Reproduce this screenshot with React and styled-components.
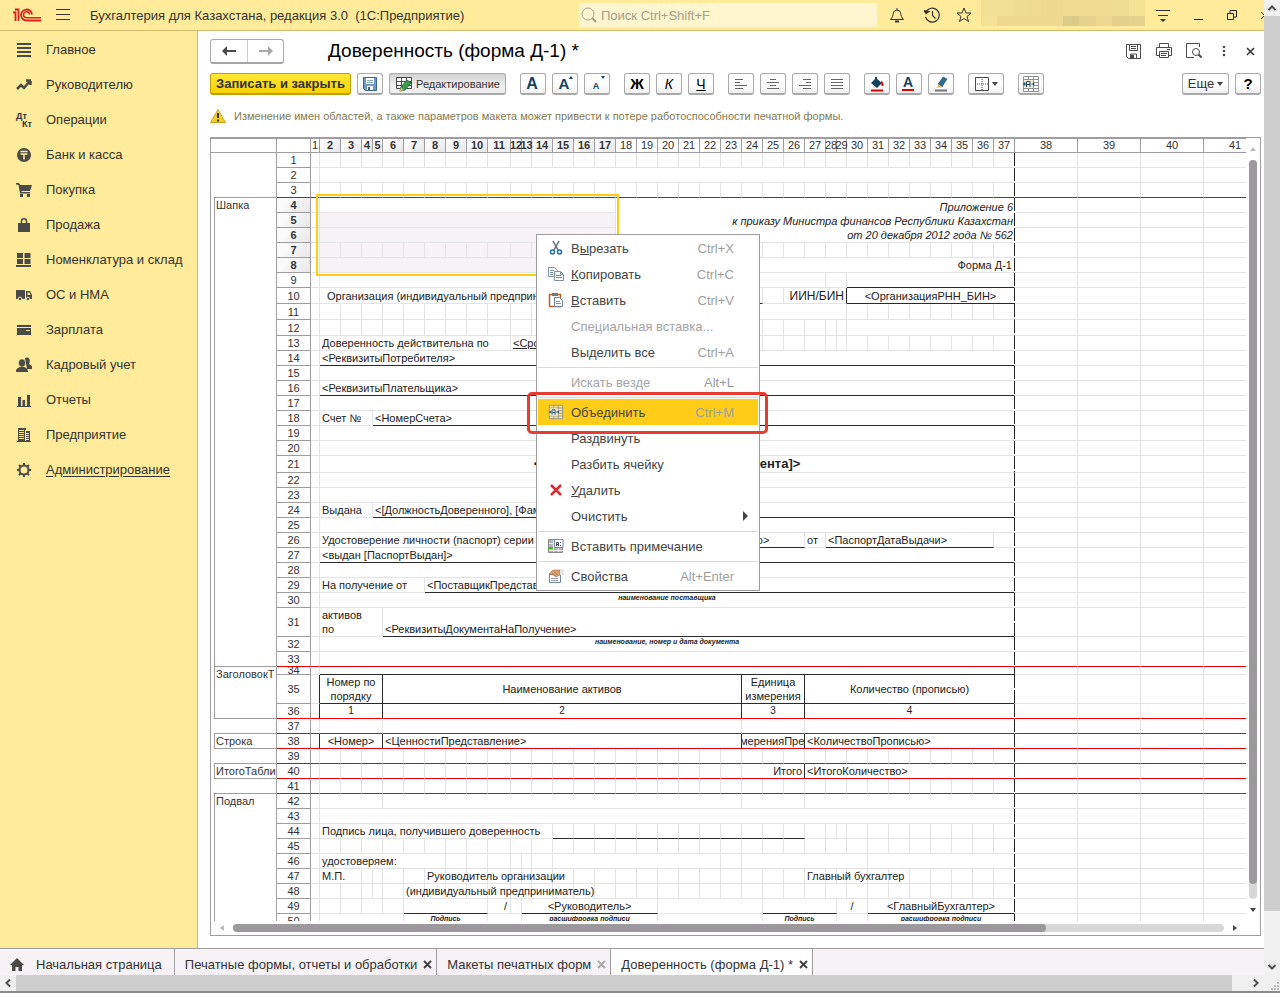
import styled, { createGlobalStyle, css } from "styled-components";

const GlobalStyle = createGlobalStyle`
    * {
        box-sizing: border-box;
    }

    body {
        margin: 0;
        font-family: "Liberation Sans", Arial, sans-serif;
        font-size: 13px;
        color: #333;
        background-color: white;
    }

    button, input {
        font-family: inherit;
        font-size: inherit;
        color: inherit;
    }
`

/* ---------- window ---------- */

const Window = styled.div`
    height: 100vh;
    display: grid;
    grid-template-columns: minmax(0, 1fr) 16px;
    grid-template-rows: minmax(0, 1fr) 18px;
    overflow: hidden;
`

const Program = styled.div`
    display: flex;
    flex-direction: column;
    min-width: 0;
    min-height: 0;
`

const OuterTrack = styled.div`
    display: flex;
    flex-direction: ${({ $row }) => ($row ? "row" : "column")};
    align-items: center;
    background-color: #f0f0f0;
    border-bottom: ${({ $row }) => ($row ? "2px solid #8a8a8a" : "0")};

    svg {
        flex: none;
    }
`

const OuterThumb = styled.div`
    flex: 1;
    align-self: stretch;
    background-color: #cdcdcd;
    margin: ${({ $row }) => ($row ? "0 16px 0 0" : "0 0 48px")};
`

const Grip = styled.div`
    background-color: #f0f0f0;
    border-bottom: 2px solid #8a8a8a;
    display: flex;
    align-items: flex-end;
    justify-content: flex-end;
`

/* ---------- top bar ---------- */

const TopBar = styled.header`
    height: 31px;
    flex: none;
    display: flex;
    align-items: center;
    background-color: #ffeb99;
    border-bottom: 1px solid #cdbb6a;
    padding-left: 12px;
    overflow: hidden;
`

const BarButton = styled.button`
    border: 0;
    padding: 0;
    background: none;
    width: ${({ $w }) => $w || 34}px;
    height: ${({ $h }) => $h || 30}px;
    flex: none;
    display: flex;
    align-items: center;
    justify-content: center;
`

// the last button of the bar runs out of the window
const CloseProgram = styled(BarButton)`
    margin-right: -16px;
`

const ProgramName = styled.div`
    margin-left: 6px;
    flex: 1;
    min-width: 0;
    white-space: pre;
    overflow: hidden;
`

const Search = styled.label`
    width: 298px;
    height: 24px;
    display: flex;
    align-items: center;
    gap: 4px;
    padding-left: 2px;
    border-radius: 2px;
    background-color: #fff5cf;
`

const SearchInput = styled.input`
    flex: 1;
    border: 0;
    padding: 0;
    outline: none;
    background: none;

    &::placeholder {
        color: #a5a08c;
        opacity: 1;
    }
`

const UserName = styled.div`
    width: 164px;
    height: 26px;
    flex: none;
    align-self: flex-start;
    display: grid;
    grid-template-columns: repeat(10, 1fr);
    grid-template-rows: 16px 10px;
`

const Blot = styled.span`
    background-color: ${({ $c }) => $c};
`

/* ---------- body ---------- */

const Body = styled.div`
    flex: 1;
    min-height: 0;
    display: flex;
`

const Sidebar = styled.nav`
    width: 198px;
    flex: none;
    background-color: #ffeb99;
    border-right: 1px solid #cdbb6a;
    padding-top: 1px;
`

const SideLink = styled.a`
    height: 35px;
    display: flex;
    align-items: center;
    gap: 14px;
    padding-left: 16px;
    color: #333;
    text-decoration: ${({ $active }) => ($active ? "underline" : "none")};
    text-underline-offset: 2px;
    white-space: nowrap;
`

const Main = styled.main`
    flex: 1;
    min-width: 0;
    display: flex;
    flex-direction: column;
    padding: 8px 3px 12px 12px;
`

const TitleRow = styled.div`
    height: 24px;
    display: flex;
    align-items: center;
`

const History = styled.div`
    width: 74px;
    height: 25px;
    display: flex;
    border: 1px solid #aaa;
    border-bottom: 2px solid #a5a5a5;
    border-radius: 3px;

    button + button {
        border-left: 1px solid #ccc;
    }
`

const Title = styled.h1`
    margin: 0 0 0 44px;
    flex: 1;
    font-size: 19px;
    font-weight: 400;
    color: black;
    white-space: nowrap;
`

const ToolRow = styled.div`
    height: 22px;
    margin-top: 10px;
    display: flex;
    gap: 14px;
`

const ToolGroup = styled.div`
    display: flex;
    gap: 6px;
    margin-left: ${({ $end }) => ($end ? "auto" : "0")};
`

const Tool = styled.button`
    height: 22px;
    width: ${({ $w }) => $w || 26}px;
    padding: 0;
    display: flex;
    align-items: center;
    justify-content: center;
    gap: 3px;
    white-space: nowrap;
    border: 1px solid #aaa;
    border-bottom: 2px solid #a9a9a9;
    border-radius: 3px;
    background: linear-gradient(#fff 50%, #f2f0f2);

    ${({ $main }) => $main && css`
        font-weight: 700;
        border-color: #c0a000;
        background: linear-gradient(#ffe838, #f7d200);
    `}

    ${({ $pressed }) => $pressed && css`
        font-size: 11px;
        background: linear-gradient(#d2d2d2, #eee 60%);
    `}
`

const Letter = styled.span`
    font-size: ${({ $s }) => $s || 15}px;
    font-weight: ${({ $thin }) => ($thin ? 400 : 700)};
    font-style: ${({ $italic }) => ($italic ? "italic" : "normal")};
    text-decoration: ${({ $under }) => ($under ? "underline" : "none")};
    color: black;
`

const Warning = styled.div`
    height: 24px;
    margin: 9px 0;
    display: flex;
    align-items: center;
    gap: 8px;
    font-size: 11px;
    color: #857b54;
    white-space: nowrap;
`

/* ---------- spreadsheet ---------- */

const Frame = styled.div`
    flex: 1;
    min-height: 0;
    border: 1px solid #a09da0;
    display: grid;
    grid-template-columns: minmax(0, 1fr) 14px;
    grid-template-rows: minmax(0, 1fr) 14px;
`

const Viewport = styled.div`
    position: relative;
    overflow: hidden;
`

const Sheet = styled.table`
    table-layout: fixed;
    width: 1056px;
    border-collapse: separate;
    border-spacing: 0;
    font-size: 11px;
    line-height: 14px;
`

const headCell = css`
    padding: 0;
    text-align: center;
    white-space: nowrap;
    font-weight: ${({ $on }) => ($on ? 700 : 400)};
    background: ${({ $on }) => ($on ? "linear-gradient(135deg, #fafafa 30%, #e9e7e9)" : "white")};
`

const ColHead = styled.th`
    ${headCell}
    height: 15px;
    border-top: 1px solid #a09da0;
    border-right: 1px solid #a09da0;
    border-bottom: 1px solid #a09da0;
    line-height: 13px;
`

const RowHead = styled.th`
    ${headCell}
    overflow: hidden;
    border-right: 1px solid #a09da0;
    border-bottom: 1px solid ${({ $red }) => ($red ? "#f00000" : "#a09da0")};
    line-height: ${({ $h }) => Math.min($h - 1, 14)}px;
`

const Gutter = styled.td`
    padding: 0;
`

const Group = styled.td`
    padding: 1px 0 0 1px;
    vertical-align: top;
    overflow: hidden;
    white-space: nowrap;
    border-left: ${({ $named }) => ($named ? "1px solid #a09da0" : "0")};
    border-right: 1px solid #a09da0;
    border-bottom: 1px solid #a09da0;
    line-height: 13px;
`

const lineColor = { light: "#e4e4e4", black: "#2a2a2a", red: "#f00000", none: "transparent" }

const Cell = styled.td`
    padding: 0 ${({ $pad }) => $pad ?? 2}px;
    overflow: ${({ $spill }) => ($spill ? "visible" : "hidden")};
    white-space: pre;
    text-align: ${({ $align }) => $align || "left"};
    vertical-align: ${({ $v }) => $v || "middle"};
    font-size: ${({ $size }) => $size || 11}px;
    font-weight: ${({ $bold }) => ($bold ? 700 : 400)};
    font-style: ${({ $italic }) => ($italic ? "italic" : "normal")};
    text-decoration: ${({ $under }) => ($under ? "underline" : "none")};
    line-height: ${({ $lh }) => $lh || 14}px;
    background-color: ${({ $sel }) => ($sel ? "#f6f2f6" : "transparent")};
    border-right: 1px solid ${({ $right }) => lineColor[$right || "light"]};
    border-bottom: 1px solid ${({ $bottom }) => lineColor[$bottom || "light"]};
    color: #222;

    /* dashed edge of the printed page */
    ${({ $page }) => $page && css`
        background-image: repeating-linear-gradient(#222 0 13px, transparent 13px 15px);
        background-position: right top;
        background-size: 1px 100%;
        background-repeat: no-repeat;
        background-origin: border-box;
    `}
`

const Clip = styled.div`
    display: flex;
    justify-content: center;
`

const Selection = styled.div`
    position: absolute;
    left: 105px;
    top: 56px;
    width: 303px;
    height: 82px;
    border: 2px solid #fc1;
`

const Track = styled.div`
    display: flex;
    flex-direction: ${({ $row }) => ($row ? "row" : "column")};
    align-items: center;
    justify-content: space-between;
    padding: ${({ $row }) => ($row ? "0 8px" : "8px 0")};
`

const Groove = styled.div`
    flex: 1;
    display: flex;
    flex-direction: ${({ $row }) => ($row ? "row" : "column")};
    ${({ $row }) => ($row ? "height: 8px; margin: 0 8px;" : "width: 8px; margin: 8px 0;")}
    border-radius: 4px;
    background-color: #d8d8d8;
`

const Thumb = styled.div`
    flex: 0 0 ${({ $part }) => $part};
    border-radius: 4px;
    background-color: #9c999c;
`

/* ---------- context menu ---------- */

const Menu = styled.div`
    position: absolute;
    left: 325px;
    top: 96px;
    width: 224px;
    border: 1px solid #a09da0;
    background-color: white;
    padding: 0 1px 1px;
`

const MenuItem = styled.button`
    width: 100%;
    height: 26px;
    border: 0;
    padding: 0 24px 0 10px;
    display: grid;
    grid-template-columns: 16px 1fr auto;
    column-gap: 7px;
    align-items: center;
    text-align: left;
    background-color: ${({ $on }) => ($on ? "#ffcc17" : "transparent")};
    color: ${({ $off }) => ($off ? "#a5a5a5" : "#444")};
`

const Keys = styled.span`
    color: ${({ $off }) => ($off ? "#999" : "#a0a0a0")};
`

const Divider = styled.hr`
    margin: 2px 0 1px;
    border: 0;
    height: 1px;
    background-color: #ddd9cf;
`

const Arrow = styled.span`
    width: 5px;
    height: 10px;
    justify-self: end;
    margin-right: -14px;
    background-color: #444;
    clip-path: polygon(0 0, 100% 50%, 0 100%);
`

const RedFrame = styled.div`
    position: absolute;
    left: 316px;
    top: 254px;
    width: 241px;
    height: 42px;
    border: 3px solid #e63c32;
    border-radius: 5px;
`

/* ---------- tabs ---------- */

const Tabs = styled.nav`
    height: 27px;
    flex: none;
    display: flex;
    background-color: #f6f2f6;
    border-top: 1px solid #a09da0;
`

const Tab = styled.div`
    display: flex;
    align-items: center;
    gap: 6px;
    padding: 5px 4px 0 10px;
    white-space: nowrap;
    border-right: 1px solid #a09da0;
    background-color: ${({ $active }) => ($active ? "white" : "transparent")};

    a {
        color: #333;
        text-decoration: none;
    }

    &:first-child {
        gap: 12px;
        padding-right: 12px;
    }
`

const TabClose = styled.button`
    border: 0;
    padding: 0;
    background: none;
    display: flex;
    color: ${({ $dim }) => ($dim ? "#aaa" : "#444")};
`

/* ---------- icons ---------- */

function Icon({ s = 16, h, box, children, ...rest }) {
    return (
        <svg width={s} height={h || s} viewBox={box || `0 0 ${s} ${h || s}`} fill="none" stroke="#4a4a4a" strokeWidth="1" aria-hidden="true" {...rest}>
            {children}
        </svg>
    )
}

const solid = { fill: "#4a4a46", stroke: "none" }

const sideIcons = {
    list: <path {...solid} d="M1 1h14v2H1zM1 5h14v2H1zM1 9h14v2H1zM1 13h14v2H1z" />,
    trend: <path d="M1 12l4-4 3 3 5-6M10 3.500h5M14.500 4v4" strokeWidth="2.500" stroke="#4a4a46" />,
    coin: <>
        <circle {...solid} cx="8" cy="8" r="7" />
        <path d="M4.500 4.500h7M4.500 7h7M8 7v5.500" stroke="#ffeb99" strokeWidth="1.500" />
    </>,
    cart: <path {...solid} d="M0 1h3l1 2h12l-2 6H5.500v1H14v1.500H4L2.500 3 0 2.500zM4 12h3v3H4zM11 12h3v3h-3z" />,
    bag: <>
        <path {...solid} d="M2 6h12v9H2z" />
        <path d="M5.500 8V4c0-3 5-3 5 0v4" stroke="#4a4a46" strokeWidth="1.500" />
    </>,
    boxes: <path {...solid} d="M1 1h6v5H1zM8.500 1h6v5h-6zM1 7h6v5H1zM8.500 7h6v5h-6zM0 13h15v2H0z" />,
    truck: <>
        <path {...solid} d="M0 3h9v9H0zM10 4h4l2 4v4h-6z" />
        <path fill="#ffeb99" stroke="none" d="M11.500 5.500h2l1 2.500h-3z" />
        <circle cx="4" cy="12" r="1.800" fill="#4a4a46" stroke="#ffeb99" />
        <circle cx="12" cy="12" r="1.800" fill="#4a4a46" stroke="#ffeb99" />
    </>,
    card: <>
        <path {...solid} d="M1 3h14v2H1zM1 6h14v7H1z" />
        <path stroke="#ffeb99" d="M10 8.500h4" />
    </>,
    people: <>
        <path {...solid} d="M9 1c4-2 6 2 4 6l3 2v3h-5z" />
        <ellipse cx="6" cy="6" rx="3.500" ry="4" fill="#4a4a46" stroke="#ffeb99" strokeWidth="0.500" />
        <path {...solid} d="M0 15c0-4 2-4 4-5h4c2 1 4 1 4 5z" />
    </>,
    chart: <path {...solid} d="M2 5h3v9H2zM6.500 8h2.500v6H6.500zM11 3h3v11h-3zM1 14h14v1H1z" />,
    building: <>
        <path {...solid} d="M2 1h8v14H2zM10 4h4v11h-4zM1 14h14v1H1z" />
        <path stroke="#ffeb99" d="M3 3.500h5M3 5.500h5M3 7.500h5M3 9.500h5M3 11.500h5M10 6.500h3M10 8.500h3M10 10.500h3M10 12.500h3M9.500 3v11" />
    </>,
    gear: <>
        <circle cx="8" cy="8" r="4.500" stroke="#4a4a46" strokeWidth="2" />
        <path d="M8 1v2M8 13v2M1 8h2M13 8h2M3 3l1.500 1.500M11.500 11.500L13 13M3 13l1.500-1.500M11.500 4.500L13 3" stroke="#4a4a46" strokeWidth="2" />
    </>,
}

const Entry = styled.span`
    width: 16px;
    display: grid;
    font: 700 9px/8px "Liberation Sans", sans-serif;

    span:last-child {
        text-align: right;
    }
`

function Logo() {
    return (
        <Icon s={30} h={16} stroke="#d9231c" strokeWidth="1.800">
            <path d="M1 5.500h2.500V14M3 2.500h3.500V14" />
            <path d="M20 7.500A5.500 5.500 0 1 0 15 13.500h14" />
            <path d="M17.500 7.500A3 3 0 1 0 15 10.700h14" strokeWidth="1.500" />
        </Icon>
    )
}

function MergeIcon({ s = 18 }) {
    return (
        <Icon s={s} box="0 0 18 18" stroke="#8f9396">
            <path fill="#fff" fillOpacity="0.500" d="M1.500 1.500h15v15h-15z" />
            <path d="M1 4.500h16M1 13.500h16M6.500 1v3M11.500 1v16M6.500 14v3M12 7.500h5M12 10.500h5" />
            <path stroke="none" fill="#f4efdd" d="M2 5h9v8H2z" />
            <path stroke="#1b4762" d="M1 9h3M9.500 9h3M2.500 7.500v3M11.500 7.500v3M4.500 12V6.500h3.500V12M5 9.500h3" />
        </Icon>
    )
}

function Disk() {
    return (
        <Icon s={16}>
            <path d="M1.500 1.500h13v13h-11l-2-2z" fill="#6d9cc9" stroke="#3d668e" />
            <path fill="#fff" stroke="none" d="M4 2h8v6H4zM5 10h6v4H5z" />
            <path stroke="#8aa" d="M5 4.500h6M5 6.500h6" />
            <path fill="#3d668e" stroke="none" d="M6 11h2v3H6z" />
        </Icon>
    )
}

function EditIcon() {
    return (
        <Icon s={18} h={16}>
            <path fill="#fff" d="M1.500 1.500h15v11h-15z" />
            <path d="M1 5.500h15M1 9.500h15M6.500 1v12M11.500 1v12" />
            <path d="M5 15l1-4 6-7 4 3-6 7z" fill="#3a9a4c" stroke="#24713a" />
            <path d="M4.500 15.500l1.500-4 3 2.500z" fill="#e0b070" stroke="none" />
        </Icon>
    )
}

function Lines({ rows }) {
    return (
        <Icon s={14} stroke="#666">
            {rows.map(([x1, x2], i) => <path key={i} d={`M${x1} ${i * 3 + 2}.5H${x2}`} />)}
        </Icon>
    )
}

function BigA({ s = 16, mark, line }) {
    return (
        <Icon s={18}>
            <text x="8" y={line ? 12 : 14} fontSize={s} fontWeight="700" textAnchor="middle" fill="#12425f" stroke="none">А</text>
            {mark && <path fill="#12425f" stroke="none" d={mark === "up" ? "M13 4l2-3 2 3z" : "M13 1h4l-2 3z"} />}
            {line && <path stroke="#e00000" strokeWidth="2" d="M2 15h12" />}
        </Icon>
    )
}

const Caret = () => <Icon s={6} h={4}><path fill="#444" stroke="none" d="M0 0h6L3 4z" /></Icon>

const Cross = ({ w = 1.5 }) => <Icon s={9} stroke="currentColor" strokeWidth={w}><path d="M1 1l7 7M8 1L1 8" /></Icon>

const Chevron = ({ d }) => <Icon s={16} stroke="#505050" strokeWidth="2"><path d={d} /></Icon>

const Tri = ({ d, c = "#444" }) => <Icon s={6} stroke="none" fill={c}><path d={d} /></Icon>

const menuIcons = {
    cut: <>
        <path d="M5 1l5 9M11 1L6 10" stroke="#5c6a75" strokeWidth="1.500" />
        <circle cx="4.500" cy="12" r="2" stroke="#1d6ca8" strokeWidth="1.500" />
        <circle cx="11.500" cy="12" r="2" stroke="#1d6ca8" strokeWidth="1.500" />
    </>,
    copy: <>
        <path d="M.5 1.500h6l3 3v6h-9z" fill="#fff" stroke="#7d8ea0" />
        <path d="M2 4.500h4M2 6.500h3M2 8.500h3" stroke="#7d8ea0" />
        <path d="M6.500 5.500h6l3 3v6h-9z" fill="#fff" stroke="#7d8ea0" />
        <path d="M8 9.500h5M8 11.500h6M12.500 6v2.500H15" stroke="#7d8ea0" />
    </>,
    paste: <>
        <path d="M1.500 2.500h11v12h-11z" fill="#fff" stroke="#b5652a" strokeWidth="1.500" />
        <path d="M4 1h6v3H4z" fill="#777" stroke="none" />
        <path d="M6.500 5.500h5l3 3v6h-8z" fill="#fff" stroke="#6d83a0" />
        <path d="M8 9.500h4M8 11.500h5" stroke="#7d8ea0" />
    </>,
    remove: <path d="M3 3l10 10M13 3L3 13" stroke="#dc2a30" strokeWidth="2.500" />,
    note: <>
        <path fill="#b5b5b5" stroke="#888" d="M.5 1.500h14v13H.500z" />
        <path stroke="#eee" d="M1 5.500h5M1 9.500h14M1 12.500h14M5.500 2v12M10.500 10v4" />
        <path fill="#fff" stroke="#6b8ba8" d="M6.500 1.500h8.500v8H6.500z" />
        <path stroke="#446" d="M8.500 8V4.500h2V8M9 6.500h1M12.500 4v1M12.500 7v1" />
        <path stroke="#4fb020" strokeWidth="2" d="M0 10h5" />
    </>,
    props: <>
        <path fill="#fff" stroke="#6b8ba8" d="M1.500 6.500h11v8h-11z" />
        <path stroke="#99a" d="M3 10.500h7M3 12.500h7" />
        <path fill="#d9a273" stroke="#9a6238" strokeWidth="0.500" d="M1 6l4-4h7v5l-4 2-3-2z" />
        <path stroke="#9a6238" strokeWidth="0.500" d="M4 5l4 3M6 4l4 3" />
        <path fill="#dfe6ee" stroke="none" d="M12 1h4v6h-4z" />
    </>,
}

/* ---------- data ---------- */

const sections = [
    ["Главное", "list"],
    ["Руководителю", "trend"],
    ["Операции", "entry"],
    ["Банк и касса", "coin"],
    ["Покупка", "cart"],
    ["Продажа", "bag"],
    ["Номенклатура и склад", "boxes"],
    ["ОС и НМА", "truck"],
    ["Зарплата", "card"],
    ["Кадровый учет", "people"],
    ["Отчеты", "chart"],
    ["Предприятие", "building"],
    ["Администрирование", "gear"],
]

const menu = [
    { text: ["В", "ы", "резать"], keys: "Ctrl+X", icon: "cut" },
    { text: ["", "К", "опировать"], keys: "Ctrl+C", icon: "copy" },
    { text: ["", "В", "ставить"], keys: "Ctrl+V", icon: "paste" },
    { text: ["Спе", "ц", "иальная вставка..."], off: true },
    { text: ["Вы", "д", "елить все"], keys: "Ctrl+A" },
    null,
    { text: ["Искать везде"], keys: "Alt+L", off: true },
    null,
    { text: ["Объединить"], keys: "Ctrl+M", icon: "merge", on: true },
    { text: ["Раздвинуть"] },
    { text: ["Разбить ячейку"] },
    { text: ["", "У", "далить"], icon: "remove" },
    { text: ["Очистить"], sub: true },
    null,
    { text: ["Вставить примечание"], icon: "note" },
    null,
    { text: ["Свойства"], keys: "Alt+Enter", icon: "props" },
]

// column widths that differ from the usual 21px
const special = { 1: 9, 4: 11, 5: 10, 11: 23, 12: 11, 13: 10, 28: 11, 29: 10, 38: 63, 39: 63, 40: 63, 41: 63 }
const columns = Array.from({ length: 41 }, (_, i) => special[i + 1] || 21)

const heights = { 10: 16, 11: 16, 12: 16, 21: 17, 31: 29, 34: 8, 35: 29 }

const groups = {
    1: ["", 3],
    4: ["Шапка", 30],
    34: ["ЗаголовокТ", 3],
    37: ["", 1],
    38: ["Строка", 1],
    39: ["", 1],
    40: ["ИтогоТабли", 1],
    41: ["", 1],
    42: ["Подвал", 9],
}

const redAfter = [3, 33, 36, 37, 38, 39, 40, 41]

const joined = [[4, 5], [12, 13], [28, 29]]
const box = { right: "black", bottom: "black" }
const small = { size: 7, bold: true, italic: true, align: "center", lh: 10, v: "top" }

// each cell: [first column, last column, text, look]
const cells = {
    1: joined,
    2: [[2, 37]],
    3: joined,
    4: [[2, 17], [18, 37, "Приложение 6\nк приказу Министра финансов Республики Казахстан\nот 20 декабря 2012 года № 562", { align: "right", italic: true, rows: 3, v: "bottom", pad: 1 }]],
    5: [[2, 17, "", { sel: true }]],
    6: [[2, 17, "", { sel: true }]],
    7: joined,
    8: [[2, 17, "", { sel: true }], [18, 37, "Форма Д-1", { align: "right" }]],
    9: [[2, 27], [28, 29], [30, 37, "", { bottom: "black" }]],
    10: [
        [2, 17, "Организация (индивидуальный предприниматель)", { pad: 7 }],
        [18, 24, "", { bottom: "black" }],
        [26, 29, "ИИН/БИН", { right: "black", size: 12, align: "right" }],
        [30, 37, "<ОрганизацияРНН_БИН>", { bottom: "black", align: "center" }],
    ],
    11: [[4, 5], [12, 13], [14, 29]],
    12: [[4, 5], [12, 13], [30, 37]],
    13: [[2, 11, "Доверенность действительна по"], [12, 24, "<СрокДействия>", { under: true }]],
    14: [[2, 37, "<РеквизитыПотребителя>", { bottom: "black" }]],
    15: [[2, 37]],
    16: [[2, 37, "<РеквизитыПлательщика>", { bottom: "black" }]],
    17: [[2, 37]],
    18: [[2, 4, "Счет №"], [5, 37, "<НомерСчета>", { bottom: "black" }]],
    19: [[2, 37]],
    20: [[2, 37]],
    21: [[2, 37, "<ДОВЕРЕННОСТЬ № [НомерДокумента]>", { align: "center", bold: true, size: 13 }]],
    22: [[2, 37]],
    23: [[2, 37]],
    24: [[2, 4, "Выдана"], [5, 37, "<[ДолжностьДоверенного], [Фамилия]>", { bottom: "black" }]],
    25: [[2, 37]],
    26: [
        [2, 15, "Удостоверение личности (паспорт) серии"],
        [16, 26, "<ПаспортНомерУдостоверено>", { bottom: "black", align: "center" }],
        [27, 27, "от"],
        [28, 36, "<ПаспортДатаВыдачи>", { bottom: "black" }],
    ],
    27: [[2, 37, "<выдан [ПаспортВыдан]>", { bottom: "black" }]],
    28: [[2, 37]],
    29: [[2, 7, "На получение от"], [8, 37, "<ПоставщикПредставление>", { bottom: "black" }]],
    30: [[2, 37, "наименование поставщика", small]],
    31: [[2, 5, "активов\nпо"], [6, 37, "<РеквизитыДокументаНаПолучение>", { bottom: "black", v: "bottom" }]],
    32: [[2, 37, "наименование, номер и дата документа", small]],
    33: [[2, 37]],
    34: [[2, 37, "", { bottom: "black" }]],
    35: [
        [1, 1, "", { right: "black" }],
        [2, 5, "Номер по\nпорядку", { ...box, align: "center" }],
        [6, 23, "Наименование активов", { ...box, align: "center" }],
        [24, 26, "Единица\nизмерения", { ...box, align: "center" }],
        [27, 37, "Количество (прописью)", { ...box, align: "center" }],
    ],
    36: [
        [1, 1, "", { right: "black" }],
        [2, 5, "1", { right: "black", align: "center", size: 10 }],
        [6, 23, "2", { right: "black", align: "center", size: 10 }],
        [24, 26, "3", { right: "black", align: "center", size: 10 }],
        [27, 37, "4", { align: "center", size: 10 }],
    ],
    37: [[2, 5], [6, 23], [24, 26], [27, 37]],
    38: [
        [1, 1, "", { right: "black" }],
        [2, 5, "<Номер>", { right: "black", align: "center" }],
        [6, 23, "<ЦенностиПредставление>", { right: "black" }],
        [24, 26, "<ЕдиницаИзмеренияПредставление>", { right: "black", clip: true, pad: 0 }],
        [27, 37, "<КоличествоПрописью>"],
    ],
    39: joined,
    40: [[4, 5], [12, 13], [24, 26, "Итого", { align: "right", right: "black" }], [27, 37, "<ИтогоКоличество>"]],
    41: joined,
    42: [[2, 5], [6, 23], [24, 26], [27, 37]],
    43: [[2, 37]],
    44: [
        [2, 14, "Подпись лица, получившего доверенность"],
        ...Array.from({ length: 12 }, (_, i) => [15 + i, 15 + i, "", { bottom: "black" }]),
    ],
    45: joined,
    46: [[2, 8, "удостоверяем:"], [15, 22], [24, 30], [31, 37]],
    47: [
        [2, 3, "М.П."],
        [8, 8, "Руководитель организации", { spill: true }],
        [27, 27, "Главный бухгалтер", { spill: true }],
    ],
    48: [[7, 7, "(индивидуальный предприниматель)", { spill: true }], [12, 13], [28, 29]],
    49: [
        [4, 5],
        [7, 10, "", { bottom: "black" }],
        [11, 11, "/", { align: "right", pad: 3 }],
        [13, 19, "<Руководитель>", { bottom: "black", align: "center" }],
        [20, 24],
        [25, 28, "", { bottom: "black" }],
        [29, 30, "/", { align: "center" }],
        [31, 37, "<ГлавныйБухгалтер>", { bottom: "black", align: "center" }],
    ],
    50: [
        [2, 6],
        [7, 10, "Подпись", small],
        [11, 12],
        [13, 19, "расшифровка подписи", small],
        [20, 24],
        [25, 28, "Подпись", small],
        [29, 30],
        [31, 37, "расшифровка подписи", small],
    ],
}

function fillRow(row) {
    const given = cells[row]
    const last = row === 5 || row === 6 ? 17 : 41
    const result = []
    let col = 1
    while (col <= last) {
        const found = given.find(([from]) => from === col)
        result.push(found || [col, col])
        col = (found ? found[1] : col) + 1
    }
    if (last === 17) {
        for (let c = 38; c <= 41; c++) result.push([c, c])
    }
    return result
}

/* ---------- parts ---------- */

function SheetCell({ row, data }) {
    const [from, to, text = "", look = {}] = data
    const page = to === 37
    return (
        <Cell
            colSpan={to - from + 1}
            rowSpan={look.rows}
            $align={look.align}
            $v={look.v}
            $size={look.size}
            $bold={look.bold}
            $italic={look.italic}
            $under={look.under}
            $lh={heights[row] === 8 ? 7 : look.lh}
            $pad={look.pad ?? (text ? 2 : 0)}
            $spill={look.spill}
            $sel={look.sel || (row === 7 && from > 1 && to < 18)}
            $bottom={redAfter.includes(row) ? "red" : look.bottom}
            $right={page ? "none" : look.right}
            $page={page}
        >
            {look.clip ? <Clip>{text}</Clip> : text}
        </Cell>
    )
}

function Spreadsheet() {
    return (
        <Sheet>
            <colgroup>
                <col style={{ width: 3 }} />
                <col style={{ width: 63 }} />
                <col style={{ width: 34 }} />
                {columns.map((w, i) => <col key={i} style={{ width: w }} />)}
            </colgroup>
            <thead>
                <tr>
                    <ColHead colSpan={2} />
                    <ColHead />
                    {columns.map((_, i) => (
                        <ColHead key={i} scope="col" $on={i > 0 && i < 17}><Clip>{i + 1}</Clip></ColHead>
                    ))}
                </tr>
            </thead>
            <tbody>
                {Object.keys(cells).map(Number).map((row) => {
                    const h = heights[row] || 15
                    const group = groups[row]
                    return (
                        <tr key={row} style={{ height: h }}>
                            <Gutter />
                            {group && <Group rowSpan={group[1]} $named={group[0] !== ""}>{group[0]}</Group>}
                            <RowHead scope="row" $h={h} $on={row > 3 && row < 9} $red={redAfter.includes(row)}>{row}</RowHead>
                            {fillRow(row).map((data) => <SheetCell key={data[0]} row={row} data={data} />)}
                        </tr>
                    )
                })}
            </tbody>
        </Sheet>
    )
}

function ContextMenu() {
    return (
        <Menu role="menu">
            {menu.map((item, i) => {
                if (!item) return <Divider key={i} />
                const [before, key, after] = item.text
                return (
                    <MenuItem key={i} role="menuitem" $on={item.on} $off={item.off}>
                        {item.icon === "merge" ? <MergeIcon s={16} /> : <Icon>{menuIcons[item.icon]}</Icon>}
                        <span>{before}{key && <u>{key}</u>}{after}</span>
                        {item.keys && <Keys $off={item.off}>{item.keys}</Keys>}
                        {item.sub && <Arrow />}
                    </MenuItem>
                )
            })}
        </Menu>
    )
}

function Header() {
    const blots = ["#f1df94", "#f1df94", "#eedc92", "#eedb91", "#ecd98f", "#eedb91", "#eedb90", "#eedb91", "#efdd92", "#f4e295",
        "#f3e195", "#ecd98f", "#ecd98f", "#ecd98f", "#ecd98f", "#dccb88", "#e4d28c", "#ecd98f", "#e2d08c", "#e5d38d"]
    return (
        <TopBar>
            <Logo />
            <BarButton $w={42} aria-label="Меню"><Icon s={14} h={12} stroke="#333"><path d="M0 .5h14M0 5.500h14M0 10.500h14" /></Icon></BarButton>
            <ProgramName>{"Бухгалтерия для Казахстана, редакция 3.0  (1С:Предприятие)"}</ProgramName>
            <Search>
                <Icon stroke="#a5a08c"><circle cx="7" cy="7" r="6" /><path strokeWidth="2" d="M11 11l4 4" /></Icon>
                <SearchInput aria-label="Поиск" placeholder="Поиск Ctrl+Shift+F" />
            </Search>
            <BarButton $w={40} aria-label="Уведомления">
                <Icon stroke="#333"><path d="M1.500 12.500c2-2 2.500-4 3-7 .5-3 6.500-3 7 0 .5 3 1 5 3 7zM8 1v2" /><path fill="#333" d="M6 14.500h4" strokeWidth="2" /></Icon>
            </BarButton>
            <BarButton $w={30} aria-label="История">
                <Icon stroke="#333" strokeWidth="1.200"><path d="M2 5a7 7 0 1 1-.5 5M8.500 4v4.500l3 3" /><path fill="#333" d="M0 3.500l2 3 3-2z" /></Icon>
            </BarButton>
            <BarButton $w={34} aria-label="Избранное">
                <Icon stroke="#333"><path d="M8 1l2 5h5l-4 3.500 1.500 5L8 11.500l-4.500 3 1.500-5L1 6h5z" /></Icon>
            </BarButton>
            <UserName>{blots.map((c, i) => <Blot key={i} $c={c} />)}</UserName>
            <BarButton $w={36} aria-label="Сервис"><Icon s={14} stroke="#333"><path d="M0 2.500h14M2 7.500h10" /><path fill="#333" stroke="none" d="M4 11h6l-3 3z" /></Icon></BarButton>
            <BarButton aria-label="Свернуть"><Icon s={9} stroke="#222"><path d="M0 8.500h9" /></Icon></BarButton>
            <BarButton aria-label="Восстановить"><Icon s={10} stroke="#222"><path d="M.5 3.500h6v6h-6zM3 3V.5h6.500V7H7" /></Icon></BarButton>
            <CloseProgram $w={31} aria-label="Закрыть"><Cross w={1} /></CloseProgram>
        </TopBar>
    )
}

function Toolbar() {
    return (
        <ToolRow>
            <ToolGroup>
                <Tool $w={141} $main>Записать и закрыть</Tool>
                <Tool aria-label="Записать"><Disk /></Tool>
                <Tool $w={117} $pressed><EditIcon />Редактирование</Tool>
            </ToolGroup>
            <ToolGroup>
                <Tool aria-label="Шрифт"><BigA /></Tool>
                <Tool aria-label="Увеличить шрифт"><BigA s={15} mark="up" /></Tool>
                <Tool aria-label="Уменьшить шрифт"><BigA s={9} mark="down" /></Tool>
            </ToolGroup>
            <ToolGroup>
                <Tool><Letter>Ж</Letter></Tool>
                <Tool><Letter $s={14} $thin $italic>К</Letter></Tool>
                <Tool><Letter $s={14} $thin $under>Ч</Letter></Tool>
            </ToolGroup>
            <ToolGroup>
                <Tool aria-label="Влево"><Lines rows={[[1, 9], [1, 6], [1, 13], [1, 9]]} /></Tool>
                <Tool aria-label="По центру"><Lines rows={[[4, 10], [1, 13], [4, 10], [1, 13]]} /></Tool>
                <Tool aria-label="Вправо"><Lines rows={[[5, 13], [8, 13], [1, 13], [5, 13]]} /></Tool>
                <Tool aria-label="По ширине"><Lines rows={[[1, 13], [1, 13], [1, 13], [1, 13]]} /></Tool>
            </ToolGroup>
            <ToolGroup>
                <Tool aria-label="Цвет фона">
                    <Icon><path fill="#12425f" stroke="none" d="M7 2l6 5-5 5-6-5zM6 1h2v4H6z" /><path stroke="#e00000" strokeWidth="2" d="M2 14.500h12M12 6c2 1 1.500 2 1.500 4" /></Icon>
                </Tool>
                <Tool aria-label="Цвет текста"><BigA s={14} line /></Tool>
                <Tool aria-label="Цвет рамки">
                    <Icon><path fill="#2f6b95" stroke="#12425f" strokeWidth="0.500" d="M5 8l5-7 4 2-5 8z" /><path fill="#e8b878" stroke="none" d="M5 8l4 3-5 1z" /><path stroke="#777" strokeWidth="2" d="M2 14.500h12" /></Icon>
                </Tool>
            </ToolGroup>
            <ToolGroup>
                <Tool $w={36} aria-label="Границы">
                    <Icon s={14}><path d="M.5.5h13v13H.500z" /><path strokeDasharray="1 1" d="M7 2v11M2 7h11" /></Icon>
                    <Caret />
                </Tool>
            </ToolGroup>
            <ToolGroup>
                <Tool aria-label="Объединить"><MergeIcon /></Tool>
            </ToolGroup>
            <ToolGroup $end>
                <Tool $w={47}>Еще<Caret /></Tool>
                <Tool><Letter>?</Letter></Tool>
            </ToolGroup>
        </ToolRow>
    )
}

function App() {
    return (
        <Window>
            <GlobalStyle />
            <Program>
                <Header />
                <Body>
                    <Sidebar>
                        {sections.map(([name, icon]) => (
                            <SideLink key={name} href="#" $active={icon === "gear"}>
                                {icon === "entry" ? <Entry><span>Дт</span><span>Кт</span></Entry> : <Icon>{sideIcons[icon]}</Icon>}
                                {name}
                            </SideLink>
                        ))}
                    </Sidebar>
                    <Main>
                        <TitleRow>
                            <History>
                                <BarButton $w={36} $h={22} aria-label="Назад"><Icon s={14} h={10}><path strokeWidth="2" d="M3 5h11" /><path fill="#4a4a4a" stroke="none" d="M0 5l5-5v10z" /></Icon></BarButton>
                                <BarButton $w={36} $h={22} aria-label="Вперед"><Icon s={14} h={10} stroke="#aaa"><path strokeWidth="2" d="M0 5h11" /><path fill="#aaa" stroke="none" d="M14 5L9 0v10z" /></Icon></BarButton>
                            </History>
                            <Title>Доверенность (форма Д-1) *</Title>
                            <BarButton $w={31} aria-label="Сохранить"><Icon s={15}><path d="M.5.5h14v14h-12l-2-2zM3.500.5v6h8v-6M5 2.500h5M5 4.500h5M4.500 14v-4h6v4" /><path fill="#4a4a4a" stroke="none" d="M5 11h3v3H5z" /></Icon></BarButton>
                            <BarButton $w={30} aria-label="Печать"><Icon><path d="M3.500 4V.5h9V4M3.500 12.500h-3v-8h15v8h-3M3.500 8.500h9v6h-9zM5 10.500h6M5 12.500h5M11 6.500h3" /></Icon></BarButton>
                            <BarButton $w={30} aria-label="Просмотр"><Icon><path d="M13.500 4V.500H.5v14H8" /><circle cx="10" cy="9" r="3.500" /><path strokeWidth="2" d="M12.500 11.500l3 3" /></Icon></BarButton>
                            <BarButton $w={30} aria-label="Еще"><Icon s={4} h={12} fill="#4a4a4a" stroke="none"><circle cx="2" cy="2" r="1.300" /><circle cx="2" cy="6" r="1.300" /><circle cx="2" cy="10" r="1.300" /></Icon></BarButton>
                            <BarButton $w={22} aria-label="Закрыть"><Cross /></BarButton>
                        </TitleRow>
                        <Toolbar />
                        <Warning>
                            <Icon s={16} h={14}><path d="M8 .5l7.500 13H.500z" fill="#f5d02c" stroke="#c8a41c" /><path stroke="#333" strokeWidth="2" d="M8 4v5M8 10.500v2" /></Icon>
                            Изменение имен областей, а также параметров макета может привести к потере работоспособности печатной формы.
                        </Warning>
                        <Frame>
                            <Viewport>
                                <Spreadsheet />
                                <Selection />
                                <ContextMenu />
                                <RedFrame />
                            </Viewport>
                            <Track>
                                <Tri c="#bbb" d="M0 5l3-4 3 4z" />
                                <Groove><Thumb $part="98%" /></Groove>
                                <Tri d="M0 1h6L3 5z" />
                            </Track>
                            <Track $row>
                                <Tri c="#bbb" d="M5 0v6L1 3z" />
                                <Groove $row><Thumb $part="82%" /></Groove>
                                <Tri d="M1 0v6l4-3z" />
                            </Track>
                        </Frame>
                    </Main>
                </Body>
                <Tabs>
                    <Tab>
                        <Icon s={14} h={14}><path {...solid} d="M7 0l7 7h-2v6H8.500V9h-3v4H2V7H0z" /></Icon>
                        <a href="#">Начальная страница</a>
                    </Tab>
                    <Tab><a href="#">Печатные формы, отчеты и обработки</a><TabClose aria-label="Закрыть"><Cross w={2} /></TabClose></Tab>
                    <Tab><a href="#">Макеты печатных форм</a><TabClose $dim aria-label="Закрыть"><Cross w={2} /></TabClose></Tab>
                    <Tab $active><a href="#">Доверенность (форма Д-1) *</a><TabClose aria-label="Закрыть"><Cross w={2} /></TabClose></Tab>
                </Tabs>
            </Program>
            <OuterTrack>
                <Chevron d="M4.500 10L8 6.500l3.500 3.500" />
                <OuterThumb />
                <Chevron d="M4.500 6L8 9.500 11.500 6" />
            </OuterTrack>
            <OuterTrack $row>
                <Chevron d="M10 4.500L6.500 8l3.500 3.500" />
                <OuterThumb $row />
                <Chevron d="M6 4.500L9.500 8 6 11.500" />
            </OuterTrack>
            <Grip><Icon s={10} stroke="none" fill="#bbb"><path d="M7 1h2v2H7zM4 4h2v2H4zM7 4h2v2H7zM1 7h2v2H1zM4 7h2v2H4zM7 7h2v2H7z" /></Icon></Grip>
        </Window>
    )
}

export default App;
